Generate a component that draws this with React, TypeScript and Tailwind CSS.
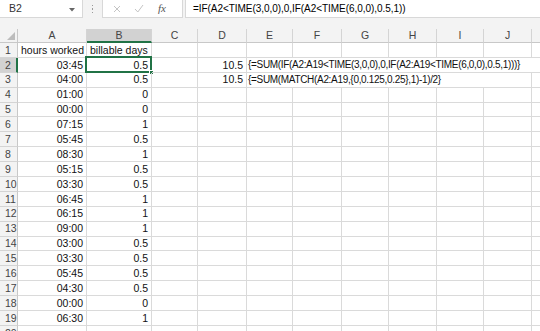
import React from 'react';

const cols = [
  { l: 'A', w: 69 },
  { l: 'B', w: 65 },
  { l: 'C', w: 46 },
  { l: 'D', w: 49 },
  { l: 'E', w: 46 },
  { l: 'F', w: 49 },
  { l: 'G', w: 47 },
  { l: 'H', w: 48 },
  { l: 'I', w: 47 },
  { l: 'J', w: 48 },
  { l: 'K', w: 48 },
];

const times: [string, string][] = [
  ['03:45', '0.5'],
  ['04:00', '0.5'],
  ['01:00', '0'],
  ['00:00', '0'],
  ['07:15', '1'],
  ['05:45', '0.5'],
  ['08:30', '1'],
  ['05:15', '0.5'],
  ['03:30', '0.5'],
  ['06:45', '1'],
  ['06:15', '1'],
  ['09:00', '1'],
  ['03:00', '0.5'],
  ['03:30', '0.5'],
  ['05:45', '0.5'],
  ['04:30', '0.5'],
  ['00:00', '0'],
  ['06:30', '1'],
];

const formulas: Record<number, string> = {
  2: '{=SUM(IF(A2:A19<TIME(3,0,0),0,IF(A2:A19<TIME(6,0,0),0.5,1)))}',
  3: '{=SUM(MATCH(A2:A19,{0,0.125,0.25},1)-1)/2}',
};

// columns whose right gridline is hidden by overflowing text
const hidden: Record<number, number[]> = {
  2: [4, 5, 6, 7, 8, 9],
  3: [4, 5, 6, 7, 8],
};

function Row({ n }: { n: number }) {
  const t = n >= 2 && n <= 19 ? times[n - 2] : null;
  const selRow = n === 2;
  return (
    <div className="flex h-[14.9px] shrink-0">
      <div
        className={`w-[18px] shrink-0 flex items-center pl-[5px] text-[#444] border-b border-[#d4d4d4] ${
          selRow ? 'bg-[#d2d2d2] border-r-2 border-r-[#217346]' : 'bg-[#f3f3f3] border-r border-r-[#c8c8c8]'
        }`}
      >
        {n}
      </div>
      {cols.map((c, i) => {
        let text: React.ReactNode = null;
        let right = true;
        if (n === 1 && i === 0) text = <span className="pl-[3px]">hours worked</span>;
        if (n === 1 && i === 1) text = <span className="pl-[3px]">billable days</span>;
        if (t && i === 0) text = <span className="ml-auto pr-[3px]">{t[0]}</span>;
        if (t && i === 1) text = <span className="ml-auto pr-[3px]">{t[1]}</span>;
        if (formulas[n] && i === 3) text = <span className="ml-auto pr-[3px]">10.5</span>;
        if (formulas[n] && i === 4)
          text = (
            <span className="absolute left-[1px] top-0 whitespace-nowrap leading-[14px] text-[10px] tracking-[-0.32px]">
              {formulas[n]}
            </span>
          );
        if (hidden[n] && hidden[n].includes(i)) right = false;
        const sel = n === 2 && i === 1;
        return (
          <div
            key={c.l}
            style={{ width: c.w }}
            className={`relative shrink-0 flex items-center border-b border-[#dadada] text-[#111] ${
              right ? 'border-r border-r-[#dadada]' : ''
            } ${i === 4 && formulas[n] ? 'z-10' : ''}`}
          >
            {text}
            {sel && (
              <div className="absolute -left-[2px] -top-[2px] -right-[1px] -bottom-[1px] border-2 border-[#217346]">
                <div className="absolute -right-[4px] -bottom-[4px] w-[5px] h-[5px] bg-[#217346] border border-white" />
              </div>
            )}
          </div>
        );
      })}
    </div>
  );
}

export default function App() {
  return (
    <div
      className="w-[540px] h-[331px] overflow-hidden bg-white flex flex-col text-[10.5px] leading-none"
      style={{ fontFamily: '"Liberation Sans", Arial, sans-serif' }}
    >
      {/* formula bar */}
      <div className="h-[29px] shrink-0 bg-[#f3f3f3] flex items-start">
        <div className="h-[18px] w-[83px] bg-white border-r border-b border-[#d8d8d8] flex items-center pl-[9px] text-[#333] relative">
          B2
          <svg className="absolute left-[69px] top-[8px]" width="6" height="4" viewBox="0 0 6 4">
            <path d="M0 0 L6 0 L3 3.5 Z" fill="#666" />
          </svg>
        </div>
        <div className="w-[19px] h-[18px] flex flex-col items-center justify-center gap-[2px]">
          <div className="w-[1.5px] h-[1.5px] bg-[#9a9a9a]" />
          <div className="w-[1.5px] h-[1.5px] bg-[#9a9a9a]" />
          <div className="w-[1.5px] h-[1.5px] bg-[#9a9a9a]" />
        </div>
        <div className="h-[18px] w-[81px] bg-white border-x border-b border-[#d8d8d8] flex items-center">
          <svg className="ml-[10px]" width="8" height="8" viewBox="0 0 8 8">
            <path d="M1 1 L7 7 M7 1 L1 7" stroke="#c4c4c4" strokeWidth="1" />
          </svg>
          <svg className="ml-[13px]" width="10" height="9" viewBox="0 0 10 9">
            <path d="M1 5 L3.8 8 L9 1" stroke="#c4c4c4" strokeWidth="1" fill="none" />
          </svg>
          <span
            className="ml-[14px] italic text-[#555] text-[11px]"
            style={{ fontFamily: '"Liberation Serif", serif' }}
          >
            fx
          </span>
        </div>
        <div className="h-[18px] flex-1 ml-[2px] bg-white border-b border-l border-[#d8d8d8] flex items-center pl-[7px] text-black whitespace-nowrap text-[10px] tracking-[-0.05px]">
          =IF(A2&lt;TIME(3,0,0),0,IF(A2&lt;TIME(6,0,0),0.5,1))
        </div>
      </div>

      {/* column headers */}
      <div className="flex h-[14px] shrink-0">
        <div className="w-[18px] shrink-0 bg-[#f3f3f3] border-r border-b border-[#c8c8c8] relative">
          <svg className="absolute right-[2px] bottom-[2px]" width="8" height="8" viewBox="0 0 8 8">
            <path d="M8 0 L8 8 L0 8 Z" fill="#bcbcbc" />
          </svg>
        </div>
        {cols.map((c, i) => (
          <div
            key={c.l}
            style={{ width: c.w }}
            className={`shrink-0 flex items-center justify-center text-[#444] border-r border-[#d4d4d4] ${
              i === 1 ? 'bg-[#d2d2d2] border-b-2 border-b-[#217346]' : 'bg-[#f3f3f3] border-b border-b-[#c8c8c8]'
            }`}
          >
            {c.l}
          </div>
        ))}
      </div>

      {Array.from({ length: 20 }, (_, k) => (
        <Row key={k} n={k + 1} />
      ))}
    </div>
  );
}
